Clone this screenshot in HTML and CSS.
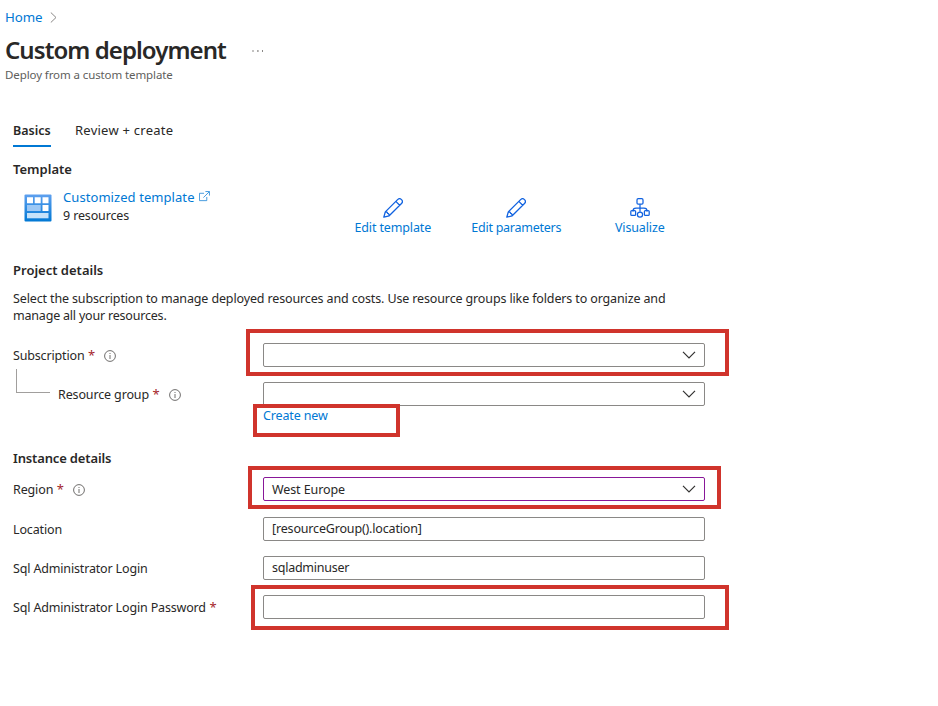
FILE: index.html
```html
<!DOCTYPE html>
<html lang="en">
<head>
<meta charset="utf-8">
<title>Custom deployment</title>
<link rel="stylesheet" href="styles.css">
</head>
<body>
<svg class="defs" width="0" height="0">
  <symbol id="info" viewBox="0 0 12 12"><circle cx="6" cy="6" r="5.4" fill="none" stroke="#605e5c" stroke-width=".9"/><path d="M6 5v4M6 3v1" stroke="#605e5c" stroke-width=".9"/></symbol>
  <symbol id="pencil" viewBox="0 0 20 20"><path d="M.8 19.2 2.3 13.9 14.6 1.6a2.75 2.75 0 0 1 3.9 3.9L6.2 17.8ZM2.3 13.9Q4.6 13.8 4.7 15.4Q6.2 15.4 6.2 17.8M12.8 3.4l3.9 3.9" fill="none" stroke="#1062e0" stroke-width="1.3" stroke-linejoin="round"/></symbol>
  <symbol id="chevron" viewBox="0 0 14 8"><path d="M1 .9 7 6.9 13 .9" fill="none" stroke="#323130" stroke-width="1.2"/></symbol>
</svg>
<nav class="crumbs"><a class="s-home">Home</a><svg width="7" height="11" viewBox="0 0 7 11"><path d="M.8.5 6 5.5.8 10.5" fill="none" stroke="#8a8886" stroke-width="1"/></svg></nav>
<header>
  <div class="title"><h1>Custom deployment</h1><svg class="more" width="12" height="2" viewBox="0 0 12 2"><path d="M.5 0h1v2h-1zM5.3 0h1.2v2H5.3zM10 0h1v2h-1z" fill="#8a8886"/></svg></div>
  <p class="subtitle">Deploy from a custom template</p>
</header>
<main>
  <div class="tabs"><div class="tab active"><span class="s-basics">Basics</span></div><div class="tab"><span class="s-review">Review + create</span></div></div>
  <h2 class="s-template">Template</h2>
  <section class="template">
    <svg class="template-icon" width="28" height="28" viewBox="0 0 28 28">
      <defs><linearGradient id="g" x1="0" y1="0" x2="0" y2="1"><stop offset="0" stop-color="#5ea0ef"/><stop offset="1" stop-color="#0078d4"/></linearGradient></defs>
      <rect x=".5" y=".5" width="27" height="27" rx="1" fill="url(#g)"/>
      <path d="M3 3.2h6v6H3zM10.7 3.2h6v6h-6zM18.5 3.2h6v6h-6zM18.5 11h6v6h-6z" fill="#fff"/>
      <path d="M3 11h13.7v6H3z" fill="#9cc8f5"/><path d="M3 19h21.5v5.3H3z" fill="#c5e2fa"/>
    </svg>
    <div class="template-text">
      <div class="line"><a class="s-customized">Customized template</a><svg class="external" width="11" height="11" viewBox="0 0 12 12"><path d="M5.5 2.5h-5v8h8v-4M7 .6h4.4V5M11.2.8 4.8 7.2" fill="none" stroke="#2588d8" stroke-width=".9"/></svg></div>
      <div class="line"><span class="s-nine">9 resources</span></div>
    </div>
    <div class="actions">
      <div class="action"><svg width="20" height="20"><use href="#pencil"/></svg><a class="s-edit">Edit template</a></div>
      <div class="action"><svg width="20" height="20"><use href="#pencil"/></svg><a class="s-params">Edit parameters</a></div>
      <div class="action"><svg width="20" height="20" viewBox="0 0 20 20"><g fill="none" stroke="#1062e0" stroke-width="1.25"><rect x="7" y=".7" width="6" height="5.4" rx="1.2"/><path d="M10 6.2v7.6M3 13.4v-.4q0-2.8 3-2.8h8q3 0 3 2.8v.4"/><rect x=".8" y="12.6" width="4.8" height="4.8" rx="1"/><rect x="14.4" y="12.6" width="4.8" height="4.8" rx="1"/><circle cx="10" cy="16.6" r="2.6"/></g></svg><a class="s-vis">Visualize</a></div>
    </div>
  </section>
  <h2 class="s-project">Project details</h2>
  <p class="intro"><span class="s-intro1">Select the subscription to manage deployed resources and costs. Use resource groups like folders to organize and</span><br><span class="s-intro2">manage all your resources.</span></p>
  <section class="form">
    <div class="row"><label class="s-sub">Subscription</label><i class="req">*</i><svg class="info" width="12" height="12"><use href="#info"/></svg>
      <div class="field"><svg class="chev" width="14" height="8"><use href="#chevron"/></svg><span class="mark mark-subscription"></span></div></div>
    <div class="row nested"><label class="s-rg">Resource group</label><i class="req">*</i><svg class="info" width="12" height="12"><use href="#info"/></svg>
      <div class="field"><svg class="chev" width="14" height="8"><use href="#chevron"/></svg></div></div>
  </section>
  <div class="create"><a class="s-create">Create new</a><span class="mark mark-create"></span></div>
  <h2 class="s-instance">Instance details</h2>
  <section class="form">
    <div class="row region"><label class="s-region">Region</label><i class="req">*</i><svg class="info" width="12" height="12"><use href="#info"/></svg>
      <div class="field selected"><span class="s-west">West Europe</span><svg class="chev" width="14" height="8"><use href="#chevron"/></svg><span class="mark mark-region"></span></div></div>
    <div class="row"><label class="s-location">Location</label><div class="field"><span class="s-locval">[resourceGroup().location]</span></div></div>
    <div class="row"><label class="s-login">Sql Administrator Login</label><div class="field"><span class="s-user">sqladminuser</span></div></div>
    <div class="row"><label class="s-password">Sql Administrator Login Password</label><i class="req">*</i><div class="field"><span class="mark mark-password"></span></div></div>
  </section>
</main>
</body>
</html>
```
FILE: styles.css
```css
* { box-sizing: border-box; }
body { margin: 0; min-height: 706px; background: #fff; color: #292827; font: 12.5px/18px "Noto Sans", "Open Sans", sans-serif; letter-spacing: -0.135px; white-space: nowrap; }
h1, h2, p { margin: 0; }
svg { display: block; flex: none; }
.defs { position: absolute; }
a { color: #0078d4; }
.crumbs { height: 35px; padding-left: 5px; display: flex; align-items: center; gap: 8px; }
.s-home { font-size: 13.3px; letter-spacing: -0.1px; padding-bottom: 2px; }
.title { display: flex; align-items: center; height: 32px; padding-left: 5px; }
h1 { font-size: 24px; line-height: 30px; padding-bottom: 2px; font-weight: 600; width: 247px; letter-spacing: -0.94px; }
.subtitle { padding-left: 5px; height: 16px; font-size: 11.5px; line-height: 16px; color: #605e5c; letter-spacing: -0.1px; }
main { padding: 38px 0 0 13px; }
.tabs { display: flex; gap: 24px; }
.tab { height: 26px; }
.active { padding-top: 1px; font-weight: 600; border-bottom: 2px solid #0078d4; width: 38px; letter-spacing: 0; }
.s-review { font-size: 13px; letter-spacing: 0.25px; }
h2 { font-size: 13px; line-height: 18px; font-weight: 600; letter-spacing: 0; }
.s-template { margin-top: 13px; }
.template { display: flex; height: 50px; margin-top: 10px; }
.template-icon { margin: 6px 0 0 11px; }
.template-text { margin-left: 11px; width: 268px; }
.line { display: flex; height: 19px; }
.s-customized { font-size: 13px; letter-spacing: 0.07px; }
.external { margin: 3px 0 0 4px; }
.actions { display: flex; margin-top: 10px; }
.action { width: 123.5px; display: flex; flex-direction: column; align-items: center; }
.action a { margin-top: 1px; }
.s-params { letter-spacing: -0.25px; }
.s-project { margin-top: 23px; }
.intro { margin-top: 11px; line-height: 17px; }
.s-intro2 { letter-spacing: -0.2px; }
.form { display: flex; flex-direction: column; gap: 15px; margin-top: 19px; }
.row { display: flex; align-items: center; height: 24px; width: 692px; }
.row label { padding-top: 2px; }
.s-sub, .s-login, .s-password { letter-spacing: -0.16px; }
.req { font-style: normal; color: #a4262c; margin-left: 3.5px; font-size: 13px; }
.info { margin: 2px 0 0 9px; }
.field { position: relative; display: flex; align-items: center; margin-left: auto; width: 442px; height: 24px; border: 1px solid #8a8886; border-radius: 2px; padding: 0 8px; }
.selected { border-color: #881798; }
.s-west { padding-top: 2px; letter-spacing: -0.1px; }
.s-locval { letter-spacing: -0.17px; }
.s-user { letter-spacing: -0.25px; }
.chev { margin-left: auto; }
.nested { position: relative; padding-left: 45px; }
.nested::before { content: ""; position: absolute; left: 3px; top: -13px; width: 33px; height: 23px; border-left: 1px solid #a19f9d; border-bottom: 1px solid #a19f9d; }
.mark { position: absolute; border: 4px solid #d0342c; pointer-events: none; }
.mark-subscription { left: -18px; top: -15px; width: 483px; height: 47px; }
.create { position: relative; margin-left: 250px; height: 18px; margin-top: 1px; }
.mark-create { left: -10px; top: -3px; width: 147px; height: 33px; }
.s-instance { margin-top: 24px; letter-spacing: -0.15px; }
.s-instance + .form { margin-top: 10px; }
.region { margin-bottom: 1px; }
.mark-region { left: -16px; top: -12px; width: 473px; height: 43px; }
.mark-password { left: -13px; top: -11px; width: 478px; height: 45px; }
```
